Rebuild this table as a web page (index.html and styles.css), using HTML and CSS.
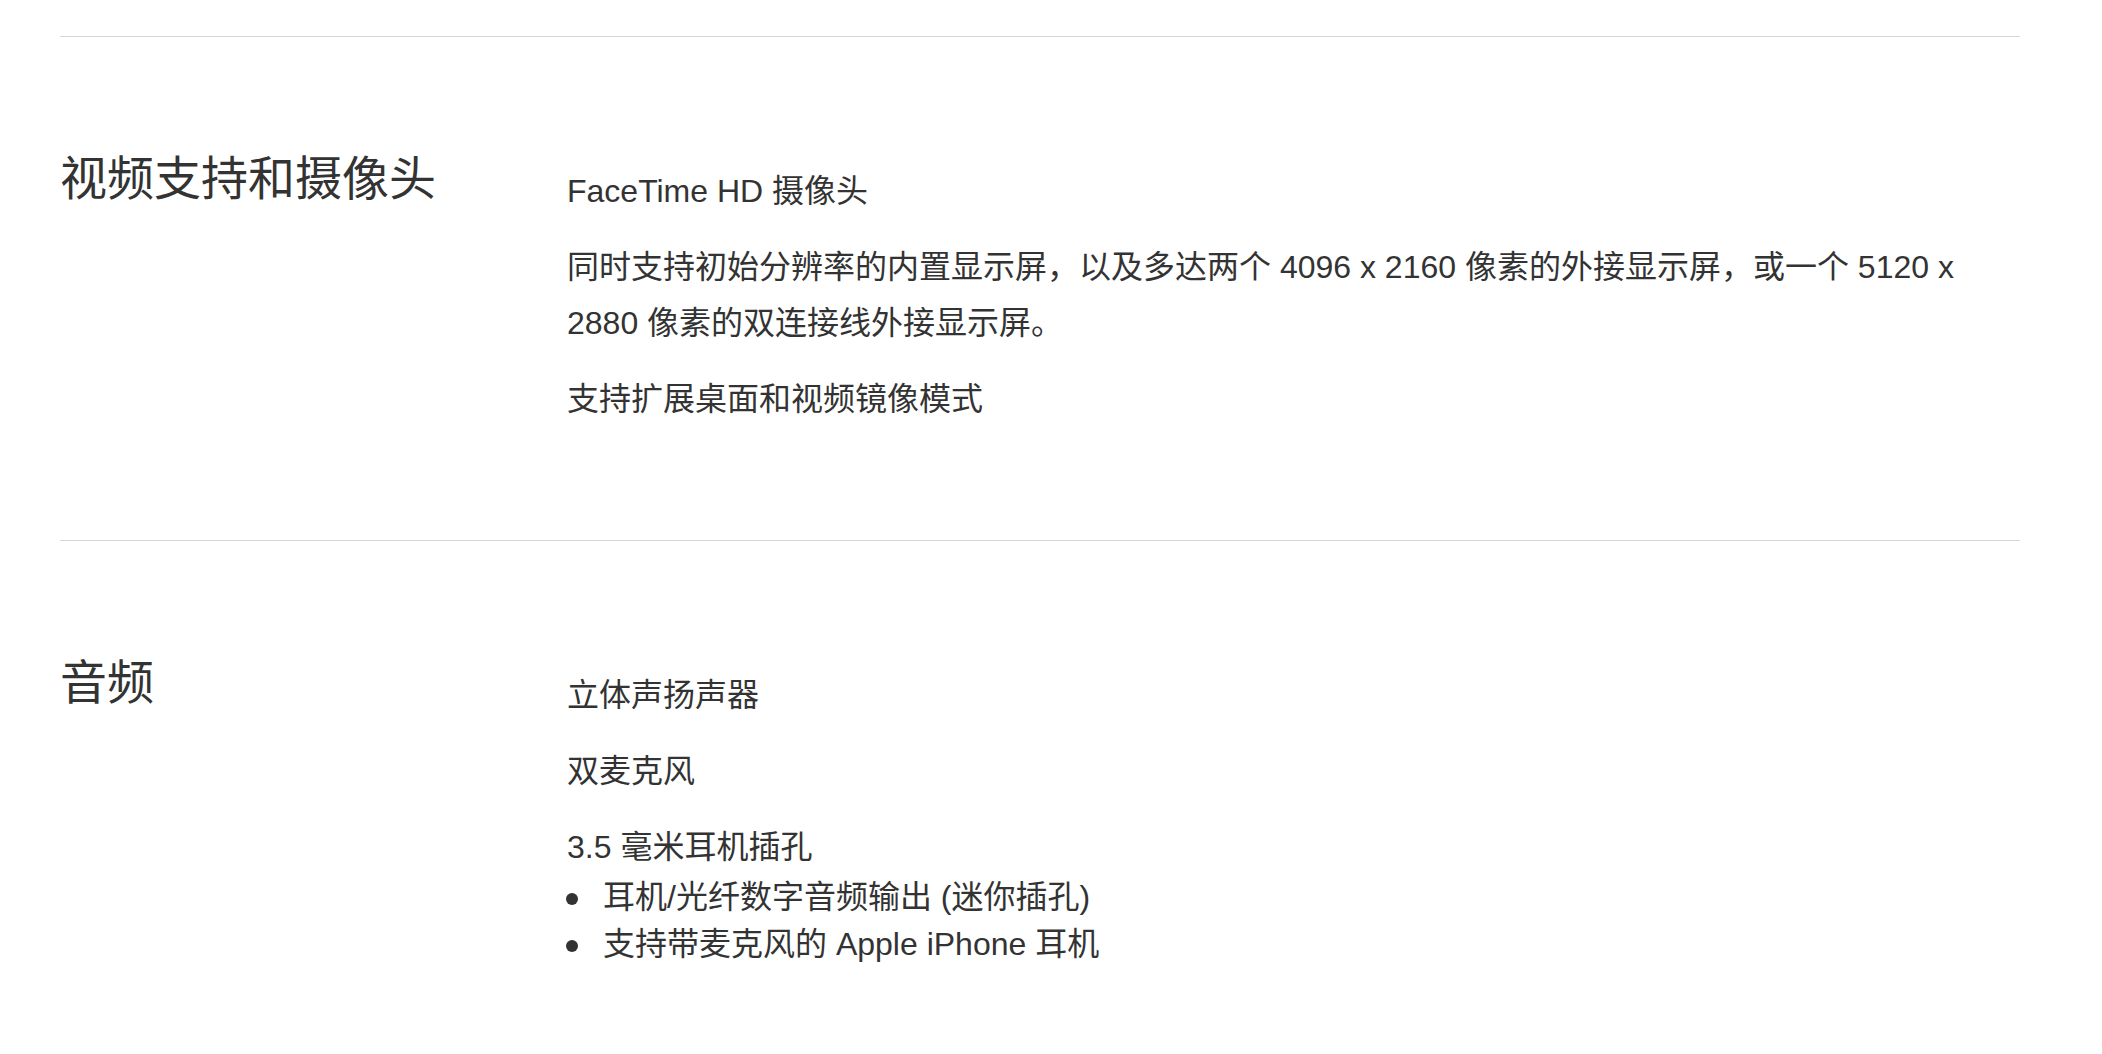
FILE: index.html
```html
<!DOCTYPE html>
<html lang="zh-CN">
<head>
<meta charset="utf-8">
<title>技术规格</title>
<link rel="stylesheet" href="styles.css">
</head>
<body>
<main class="specs">
  <section class="spec-row">
    <h2 class="spec-title">视频支持和摄像头</h2>
    <div class="spec-body">
      <p>FaceTime HD 摄像头</p>
      <p>同时支持初始分辨率的内置显示屏，以及多达两个 4096 x 2160 像素的外接显示屏，或一个 5120 x 2880 像素的双连接线外接显示屏。</p>
      <p>支持扩展桌面和视频镜像模式</p>
    </div>
  </section>
  <section class="spec-row">
    <h2 class="spec-title">音频</h2>
    <div class="spec-body">
      <p>立体声扬声器</p>
      <p>双麦克风</p>
      <p class="tight">3.5 毫米耳机插孔</p>
      <ul class="bullets">
        <li>耳机/光纤数字音频输出 (迷你插孔)</li>
        <li>支持带麦克风的 Apple iPhone 耳机</li>
      </ul>
    </div>
  </section>
</main>
</body>
</html>
```

FILE: styles.css
```css
html, body {
  margin: 0;
  padding: 0;
  background: #ffffff;
}

body {
  font-family: "Liberation Sans", "Noto Sans CJK SC", sans-serif;
  color: #333333;
}

.specs {
  width: 1960px;
  margin-left: 60px;
  padding-top: 36px;
}

.spec-row {
  display: grid;
  grid-template-columns: 507px 1fr;
  border-top: 1px solid #d6d6d6;
  padding: 113px 0;
}

.spec-title {
  margin: 0;
  padding-top: 1px;
  font-size: 47px;
  line-height: 56px;
  font-weight: 400;
  color: #333333;
}

.spec-body {
  padding-top: 13px;
  font-size: 32px;
  line-height: 56px;
}

.spec-body p {
  margin: 0 0 20px 0;
}

.spec-body p:last-child {
  margin-bottom: 0;
}

.spec-body p.tight {
  margin-bottom: 0;
}

.bullets {
  list-style: none;
  margin: -1px 0 0 0;
  padding: 0;
}

.bullets li {
  display: flex;
  align-items: center;
  line-height: 47px;
}

.bullets li::before {
  content: "";
  flex: none;
  width: 12px;
  height: 12px;
  border-radius: 50%;
  background: #333333;
  margin-left: -1px;
  margin-right: 25px;
  margin-top: 2px;
}
```
